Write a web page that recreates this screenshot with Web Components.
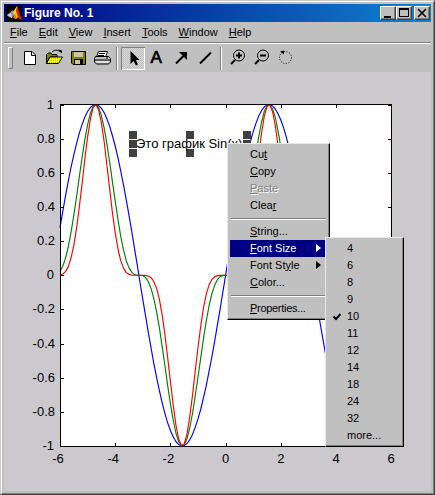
<!DOCTYPE html>
<html><head><meta charset="utf-8">
<style>html,body{margin:0;padding:0;background:#c0c0c0}body{font:11px "Liberation Sans",Arial,sans-serif;color:#000}</style>
</head><body>
<fig-window>
  <fig-title slot="title">Figure No. 1</fig-title>
  <fig-menubar slot="menubar">
    <span><u>F</u>ile</span><span><u>E</u>dit</span><span><u>V</u>iew</span><span><u>I</u>nsert</span><span><u>T</u>ools</span><span><u>W</u>indow</span><span><u>H</u>elp</span>
  </fig-menubar>
  <fig-toolbar slot="toolbar"></fig-toolbar>
  <fig-plot slot="canvas"></fig-plot>
  <pop-menu slot="overlay" style="left:227px;top:143px;width:103px">
    <pop-item>Cu<u>t</u></pop-item>
    <pop-item><u>C</u>opy</pop-item>
    <pop-item disabled><u>P</u>aste</pop-item>
    <pop-item>Clea<u>r</u></pop-item>
    <pop-sep></pop-sep>
    <pop-item><u>S</u>tring...</pop-item>
    <pop-item active sub><u>F</u>ont Size</pop-item>
    <pop-item sub>Font St<u>y</u>le</pop-item>
    <pop-item><u>C</u>olor...</pop-item>
    <pop-sep></pop-sep>
    <pop-item style="letter-spacing:-.3px"><u>P</u>roperties...</pop-item>
  </pop-menu>
  <pop-menu slot="overlay" style="left:325px;top:237px;width:79px;--pl:19px">
    <pop-item>4</pop-item><pop-item>6</pop-item><pop-item>8</pop-item><pop-item>9</pop-item>
    <pop-item checked>10</pop-item><pop-item>11</pop-item><pop-item>12</pop-item><pop-item>14</pop-item>
    <pop-item>18</pop-item><pop-item>24</pop-item><pop-item>32</pop-item><pop-item>more...</pop-item>
  </pop-menu>
</fig-window>
<script>
function def(name, html, extra){
  class C extends HTMLElement{
    constructor(){super();this.attachShadow({mode:'open'}).innerHTML=html;}
    connectedCallback(){ if(extra) extra(this); }
  }
  customElements.define(name,C);
}
def('fig-window',`<style>
:host{display:block;position:relative;width:435px;height:495px;box-sizing:border-box;border:1px solid;border-color:#c8c8c8 #404040 #404040 #c8c8c8;background:#c0c0c0;overflow:hidden}
.in{box-sizing:border-box;height:100%;border:1px solid;border-color:#fff #808080 #808080 #fff;padding:2px;display:flex;flex-direction:column}
.rule{height:2px;flex:none;background:linear-gradient(#808080 50%,#fff 50%)}
.ov{position:absolute;left:-1px;top:-1px}
</style><div class="in"><slot name="title"></slot><slot name="menubar"></slot><div class="rule"></div><slot name="toolbar"></slot><slot name="canvas"></slot></div><div class="ov"><slot name="overlay"></slot></div>`);

def('fig-title',`<style>
:host{display:flex;align-items:center;height:18px;flex:none;background:linear-gradient(90deg,#000080,#1084d0);color:#fff;font:bold 12px "Liberation Sans",sans-serif}
.logo{margin:0 2px 0 2px;flex:none;display:block}
.t{flex:1}
.b{width:16px;height:14px;box-sizing:border-box;background:#c0c0c0;border:1px solid;border-color:#fff #404040 #404040 #fff;box-shadow:inset -1px -1px #808080;flex:none;display:block}
.b svg{display:block}
.g{display:flex;margin-right:1px}.c{margin-left:2px}
</style>
<svg class="logo" width="16" height="16" viewBox="0 0 16 16" shape-rendering="geometricPrecision">
<rect width="16" height="16" fill="#000"/>
<polygon points="1,10 7,5 9,9 6,13 3,12" fill="#8a93a8"/><polygon points="1,10 5,8 6,13" fill="#c8ccd8"/>
<polygon points="11,1 7,7 9,14 13,12" fill="#f8d810"/><polygon points="11,1 16,15 12,13 10,6" fill="#e02010"/>
<polygon points="9,8 11,14 7,13" fill="#f08010"/></svg>
<span class="t"><slot></slot></span>
<span class="g">
<span class="b"><svg width="14" height="12" viewBox="0 0 14 12"><rect x="3" y="9" width="7" height="2" fill="#000"/></svg></span>
<span class="b"><svg width="14" height="12" viewBox="0 0 14 12"><path d="M2 1h10v9H2z M3 3v6h8V3z" fill="#000" fill-rule="evenodd"/></svg></span>
<span class="b c"><svg width="14" height="12" viewBox="0 0 14 12"><path d="M3 2 11 10M11 2 3 10" stroke="#000" stroke-width="1.6"/></svg></span>
</span>`);

def('fig-menubar',`<style>
:host{display:flex;align-items:center;gap:11px;height:20px;flex:none;padding:0 0 0 6px;font:11px "Liberation Sans",sans-serif}
</style><slot></slot>`);

const hatch='<defs><pattern id="dy" width="2" height="2" patternUnits="userSpaceOnUse"><rect width="2" height="2" fill="#ffff00"/><rect width="1" height="1" fill="#fff"/><rect x="1" y="1" width="1" height="1" fill="#c0c000"/></pattern></defs>';
const ic=(inner,cls='')=>`<span class="tb ${cls}"><svg width="24" height="23" viewBox="0 0 24 23">${inner}</svg></span>`;
def('fig-toolbar',`<style>
:host{display:flex;align-items:flex-start;height:28px;flex:none;box-sizing:border-box;padding:3px 0 0 4px}
.h{width:5px;height:22px;box-sizing:border-box;border:1px solid;border-color:#fff #808080 #808080 #fff;flex:none;background:#c0c0c0}
.hg{display:flex;width:10px;flex:none}
.tb{display:block;width:24px;height:23px;flex:none;box-sizing:border-box}
.tb svg{display:block}
.on{box-shadow:inset 1px 1px #808080,inset -1px -1px #fff;background:repeating-conic-gradient(#d8d8d8 0 25%,#c0c0c0 0 50%) 0 0/2px 2px}
.s{flex:none;width:2px;height:23px;background:linear-gradient(90deg,#808080 50%,#fff 50%)}
.s1{margin:0 3px 0 2px}.s2{margin:0 4px 0 3px}
.a{position:relative}.a b{position:absolute;left:5.5px;top:1px;font:17px/20px "Liberation Sans",sans-serif;-webkit-text-stroke:.7px #000}
</style>
<span class="hg"><span class="h"></span></span>
${ic('<path d="M6.5 4.5H14L17.5 8V17.5H6.5Z" fill="#fff" stroke="#000"/><path d="M13.5 4.5V8.5H17.5" fill="none" stroke="#000"/>')}
${ic(hatch+'<path d="M4.5 16.5V7.5L6 6H9L10 7.5H15V10H8L4.5 16.5Z" fill="#808000" stroke="#000"/><path d="M4.5 16.5L8 10H20.5L16.5 16.5Z" fill="url(#dy)" stroke="#000"/><path d="M10 5C12 3 15 2.5 18 4.5" fill="none" stroke="#000"/><path d="M16 2.5L20 3.5V6.5Z" fill="#000"/>')}
${ic('<path d="M5.5 4.5H19.5V17.5H7L5.5 16Z" fill="#808000" stroke="#000"/><rect x="8" y="5" width="9" height="5" fill="#c8c8a0"/><rect x="8" y="12" width="9" height="5" fill="#000"/><rect x="9" y="13" width="5" height="4" fill="#c8c8a0"/>')}
${ic('<path d="M8.5 4.5H17.5L15.5 10H6.5Z" fill="#fff" stroke="#000"/><path d="M9 6.5H15M8 8.5H14" stroke="#000"/><path d="M5.5 9.5H18.5L20.5 11.5V15L18.5 17H6.5L4.5 15V11.5Z" fill="#c0c0c0" stroke="#000"/><path d="M5 13H20" stroke="#000"/><path d="M6 15H19" stroke="#fff"/><rect x="16" y="10.5" width="2" height="1" fill="#000"/>')}
<span class="s s1"></span>
${ic('<path d="M9.5 4V17L12.5 14L15 18.5L17 17.5L14.8 13H18.5Z" fill="#000"/>','on')}<span class="tb a"><b>A</b></span>
${ic('<path d="M7 16.5L15 8.5" stroke="#000" stroke-width="2"/><path d="M10 5H18V13Z" fill="#000"/>')}
${ic('<path d="M7 16.5L18 5.5" stroke="#000" stroke-width="2"/>')}
<span class="s s2"></span>
${ic('<circle cx="13" cy="8.5" r="5.5" fill="none" stroke="#000"/><path d="M5 17L9 13" stroke="#000" stroke-width="2"/><path d="M10 8.5H16M13 5.5V11.5" stroke="#000" stroke-width="2"/>')}
${ic('<circle cx="13" cy="8.5" r="5.5" fill="none" stroke="#000"/><path d="M5 17L9 13" stroke="#000" stroke-width="2"/><path d="M10 8.5H16" stroke="#000" stroke-width="2"/>')}
${ic('<circle cx="11.5" cy="10.5" r="6" fill="none" stroke="#000" stroke-dasharray="1 1.6"/><path d="M6 4.5L10 3.5V7.5Z" fill="#000"/>')}
`);

def('fig-plot',`<style>
:host{display:block;flex:1;min-height:0;background:repeating-conic-gradient(#cac7cc 0 25%,#cecbd0 0 50%) 0 0/2px 2px}
svg{display:block}
text{font:13px "Liberation Sans",sans-serif;fill:#000}
</style><svg id="s" width="427" height="419" viewBox="4 72 427 419" xmlns="http://www.w3.org/2000/svg"></svg>`,
(el)=>{
  const X=x=>60+(x+6)*27.6, Y=y=>104.5+(1-y)*170.75;
  let o='<rect x="60" y="104" width="331.5" height="342" fill="#fff"/>';
  const f=[[1,'#00f'],[3,'#008000'],[5,'#f00']];
  for(const [p,c] of f){
    const pts=[];
    for(let i=0;i<=120;i++){const x=-6+i/10;pts.push(X(x).toFixed(1)+','+Y(Math.pow(Math.sin(x),p)).toFixed(1));}
    o+=`<polyline points="${pts.join(' ')}" fill="none" stroke="${c}" stroke-width="1.15" stroke-linejoin="round"/>`;
  }
  o+='<g stroke="#000" shape-rendering="crispEdges"><path d="M60.5 104.5H391.5V446.5H60.5Z" fill="none"/>';
  for(let i=-6;i<=6;i+=2){const x=Math.round(X(i))+.5;o+=`<path d="M${x} 446V443M${x} 105V108"/>`;}
  for(let i=-5;i<=5;i++){const y=Math.round(Y(i/5))+.5;o+=`<path d="M61 ${y}H64M391 ${y}H388"/>`;}
  o+='</g>';
  for(let i=-6;i<=6;i+=2){o+=`<text x="${X(i)-(i<0?2:0)}" y="463" text-anchor="middle">${i}</text>`;}
  for(let i=-5;i<=5;i++){const v=i/5,l=(Math.abs(i)==5||i==0)?String(v):v.toFixed(1);o+=`<text x="${Math.abs(i)==5||i==0?54:55}" y="${Y(v)+4}" text-anchor="end">${l}</text>`;}
  const hs=[[129,131],[129,140],[129,149],[186,131],[186,149],[243,131],[243,140]];
  for(const [x,y] of hs)o+=`<rect x="${x}" y="${y}" width="8" height="8" fill="#404040"/>`;
  o+='<text x="136" y="148">Это график Sin(x)</text>';
  el.shadowRoot.getElementById('s').innerHTML=o;
});

def('pop-menu',`<style>
:host{display:block;position:absolute;box-sizing:border-box;background:#c0c0c0;border:1px solid;border-color:#e8e8e8 #000 #000 #e8e8e8;box-shadow:inset -1px -1px #808080;padding:2px;font:11px "Liberation Sans",sans-serif}
</style><slot></slot>`);

def('pop-sep',`<style>
:host{display:block;height:9px;position:relative}
i{position:absolute;left:1px;right:1px;top:4px;height:2px;background:linear-gradient(#808080 50%,#fff 50%)}
</style><i></i>`);

def('pop-item',`<style>
:host{display:flex;align-items:center;box-sizing:border-box;height:17px;padding:0 0 2px var(--pl,20px);position:relative;white-space:nowrap}
:host([active]){background:#000080;color:#fff}
:host([disabled]){color:#808080;text-shadow:1px 1px #fff}
:host([sub])::after{content:"";position:absolute;right:6px;top:4px;border:4px solid transparent;border-left:5px solid currentColor;border-right:0}
svg{display:none;position:absolute;left:5px;top:5px}
:host([checked]) svg{display:block}
</style><svg width="8" height="8" viewBox="0 0 8 8"><path d="M.5 3.5L3 6L7.5 1" fill="none" stroke="#000" stroke-width="2"/></svg><slot></slot>`);
</script>
</body></html>
